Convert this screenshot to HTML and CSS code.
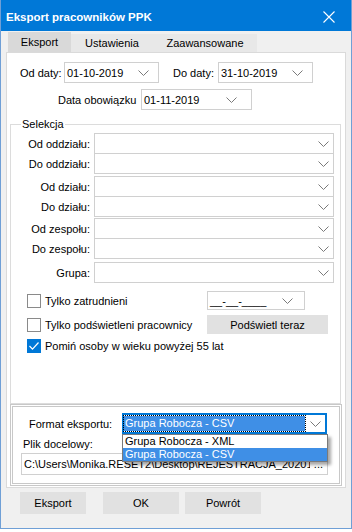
FILE: index.html
```html
<!DOCTYPE html>
<html lang="pl">
<head>
    <meta charset="UTF-8">
    <meta name="viewport" content="width=device-width, initial-scale=1.0">
    <title>Eksport pracowników PPK</title>
    <link rel="stylesheet" href="styles.css">
</head>
<body>
    <div class="window">
        <div class="titlebar">
            <span class="title">Eksport pracowników PPK</span>
            <svg class="close" width="12" height="12" viewBox="0 0 12 12"><path d="M0.5 0.5 L11.5 11.5 M11.5 0.5 L0.5 11.5" stroke="#fff" stroke-width="1.1" fill="none"/></svg>
        </div>
        <div class="client">
            <div class="tabs">
                <div class="tab tab-1 active">Eksport</div>
                <div class="tab tab-2">Ustawienia</div>
                <div class="tab tab-3">Zaawansowane</div>
            </div>
            <div class="page">
                <div class="date-row">
                    <span class="lbl lbl-od">Od daty:</span>
                    <div class="combo date">
                        <span class="val">01-10-2019</span>
                        <svg class="chev" width="11" height="6" viewBox="0 0 11 6"><polyline points="0.5,0.5 5.5,5.5 10.5,0.5" fill="none" stroke="#7a7a7a"/></svg>
                    </div>
                    <span class="lbl lbl-do">Do daty:</span>
                    <div class="combo date">
                        <span class="val">31-10-2019</span>
                        <svg class="chev" width="11" height="6" viewBox="0 0 11 6"><polyline points="0.5,0.5 5.5,5.5 10.5,0.5" fill="none" stroke="#7a7a7a"/></svg>
                    </div>
                </div>
                <div class="date-row obow">
                    <span class="lbl lbl-obow">Data obowiązku</span>
                    <div class="combo date wide">
                        <span class="val">01-11-2019</span>
                        <svg class="chev" width="11" height="6" viewBox="0 0 11 6"><polyline points="0.5,0.5 5.5,5.5 10.5,0.5" fill="none" stroke="#7a7a7a"/></svg>
                    </div>
                </div>

                <fieldset class="group">
                    <legend>Selekcja</legend>
                    <div class="pair first">
                        <div class="sel-row"><span class="sel-lbl">Od oddziału:</span><div class="combo sel"><svg class="chev" width="11" height="6" viewBox="0 0 11 6"><polyline points="0.5,0.5 5.5,5.5 10.5,0.5" fill="none" stroke="#7a7a7a"/></svg></div></div>
                        <div class="sel-row"><span class="sel-lbl">Do oddziału:</span><div class="combo sel"><svg class="chev" width="11" height="6" viewBox="0 0 11 6"><polyline points="0.5,0.5 5.5,5.5 10.5,0.5" fill="none" stroke="#7a7a7a"/></svg></div></div>
                    </div>
                    <div class="pair second">
                        <div class="sel-row"><span class="sel-lbl">Od działu:</span><div class="combo sel"><svg class="chev" width="11" height="6" viewBox="0 0 11 6"><polyline points="0.5,0.5 5.5,5.5 10.5,0.5" fill="none" stroke="#7a7a7a"/></svg></div></div>
                        <div class="sel-row"><span class="sel-lbl">Do działu:</span><div class="combo sel"><svg class="chev" width="11" height="6" viewBox="0 0 11 6"><polyline points="0.5,0.5 5.5,5.5 10.5,0.5" fill="none" stroke="#7a7a7a"/></svg></div></div>
                    </div>
                    <div class="pair third">
                        <div class="sel-row"><span class="sel-lbl">Od zespołu:</span><div class="combo sel"><svg class="chev" width="11" height="6" viewBox="0 0 11 6"><polyline points="0.5,0.5 5.5,5.5 10.5,0.5" fill="none" stroke="#7a7a7a"/></svg></div></div>
                        <div class="sel-row"><span class="sel-lbl">Do zespołu:</span><div class="combo sel"><svg class="chev" width="11" height="6" viewBox="0 0 11 6"><polyline points="0.5,0.5 5.5,5.5 10.5,0.5" fill="none" stroke="#7a7a7a"/></svg></div></div>
                    </div>
                    <div class="pair last">
                        <div class="sel-row"><span class="sel-lbl">Grupa:</span><div class="combo sel"><svg class="chev" width="11" height="6" viewBox="0 0 11 6"><polyline points="0.5,0.5 5.5,5.5 10.5,0.5" fill="none" stroke="#7a7a7a"/></svg></div></div>
                    </div>

                    <div class="check-row row-1">
                        <div class="check"><span class="box"></span><span>Tylko zatrudnieni</span></div>
                        <div class="combo mask">
                            <span class="val">__-__-____</span>
                            <svg class="chev" width="11" height="6" viewBox="0 0 11 6"><polyline points="0.5,0.5 5.5,5.5 10.5,0.5" fill="none" stroke="#7a7a7a"/></svg>
                        </div>
                    </div>
                    <div class="check-row row-2">
                        <div class="check"><span class="box"></span><span>Tylko podświetleni pracownicy</span></div>
                        <button class="btn highlight">Podświetl teraz</button>
                    </div>
                    <div class="check-row row-3">
                        <div class="check"><span class="box checked"><svg width="12" height="12" viewBox="0 0 12 12"><polyline points="1.5,6 4.5,9.2 10.5,2.5" fill="none" stroke="#fff" stroke-width="1.2"/></svg></span><span>Pomiń osoby w wieku powyżej 55 lat</span></div>
                    </div>
                </fieldset>

                <div class="export-panel">
                    <div class="format-row">
                        <span class="format-lbl">Format eksportu:</span>
                        <div class="combo format">
                            <span class="current">Grupa Robocza - CSV</span>
                            <svg class="chev" width="11" height="6" viewBox="0 0 11 6"><polyline points="0.5,0.5 5.5,5.5 10.5,0.5" fill="none" stroke="#7a7a7a"/></svg>
                            <ul class="dropdown">
                                <li>Grupa Robocza - XML</li>
                                <li class="hover">Grupa Robocza - CSV</li>
                            </ul>
                        </div>
                    </div>
                    <div class="file-lbl">Plik docelowy:</div>
                    <div class="path">
                        <span class="path-text">C:\Users\Monika.RESET2\Desktop\REJESTRACJA_20201201.csv</span>
                        <span class="dots">...</span>
                    </div>
                </div>
            </div>
            <div class="buttons">
                <button class="btn b-export">Eksport</button>
                <button class="btn b-ok">OK</button>
                <button class="btn b-back">Powrót</button>
            </div>
        </div>
    </div>
</body>
</html>
```

FILE: styles.css
```css
body {
    margin: 0;
    background: #ffffff;
    font-family: "Liberation Sans", Arial, sans-serif;
    font-size: 11px;
    color: #000000;
}

.window {
    width: 350px;
    height: 528px;
    border: 1px solid #6f9fd6;
    border-top: 0;
    background: #f0f0f0;
    display: flex;
    flex-direction: column;
}

.titlebar {
    height: 31px;
    box-sizing: border-box;
    padding: 2px 16px 0 5px;
    background: #0078d7;
    color: #ffffff;
    display: flex;
    align-items: center;
    justify-content: space-between;
}

.title {
    font-weight: bold;
    font-size: 11.5px;
}

.client {
    padding-top: 1px;
}

/* tabs */
.tabs {
    display: flex;
    align-items: flex-end;
    height: 20px;
    margin-left: 7px;
}

.tab {
    height: 18px;
    line-height: 18px;
    text-align: center;
    background: #e8e8e8;
}

.tab.active {
    height: 20px;
    line-height: 20px;
    background: #d9d9d9;
}

.tab-1 { width: 63px; }
.tab-2 { width: 82px; }
.tab-3 { width: 104px; }

.page {
    margin-left: 5px;
    width: 340px;
    height: 436px;
    box-sizing: border-box;
    border: 1px solid #dadada;
    background: #ffffff;
}

/* combos */
.combo {
    box-sizing: border-box;
    height: 21px;
    border: 1px solid #d0d0d0;
    background: #ffffff;
    display: flex;
    align-items: center;
    justify-content: space-between;
}

.combo .val {
    padding-left: 2px;
}

.chev {
    flex-shrink: 0;
}

.date-row {
    display: flex;
    align-items: center;
    margin: 9px 0 0 13px;
}

.lbl-od { width: 44px; }
.lbl-do { width: 45px; margin-left: 14px; }

.combo.date {
    width: 95px;
    padding-right: 9px;
}

.date-row.obow {
    margin: 6px 0 0 51px;
}

.lbl-obow { width: 83px; }

.combo.date.wide {
    width: 111px;
    padding-right: 14px;
}

/* group box */
.group {
    margin: 7px 0 0 3px;
    padding: 0;
    width: 331px;
    height: 287px;
    box-sizing: border-box;
    border: 1px solid #dcdcdc;
}

.group legend {
    margin-left: 10px;
    padding: 0 1px;
    line-height: 14px;
}

.pair.first { margin-top: 2px; }
.pair.second { margin-top: 2px; }
.pair.third { margin-top: 1px; }
.pair.last { margin-top: 3px; }

.sel-row {
    display: flex;
    align-items: center;
}

.sel-row + .sel-row {
    margin-top: -1px;
}

.sel-lbl {
    width: 79px;
    text-align: right;
    margin-right: 4px;
}

.combo.sel {
    width: 240px;
    justify-content: flex-end;
    padding-right: 4px;
}

.check-row {
    display: flex;
    align-items: center;
    margin-left: 16px;
}

.check-row.row-1 { margin-top: 8px; height: 19px; }
.check-row.row-2 { margin-top: 5px; height: 19px; }
.check-row.row-3 { margin-top: 5px; height: 14px; }

.check {
    width: 180px;
    display: flex;
    align-items: center;
    gap: 4px;
    white-space: nowrap;
}

.row-3 .check {
    width: auto;
}

.box {
    width: 14px;
    height: 14px;
    box-sizing: border-box;
    border: 1px solid #8a8a8a;
    background: #ffffff;
    display: flex;
    align-items: center;
    justify-content: center;
}

.box.checked {
    border-color: #0078d7;
    background: #0078d7;
}

.combo.mask {
    width: 98px;
    height: 19px;
    padding-right: 11px;
}

.btn {
    font-family: "Liberation Sans", Arial, sans-serif;
    font-size: 11px;
    color: #000000;
    background: #e1e1e1;
    border: 0;
    padding: 0;
}

.btn.highlight {
    width: 121px;
    height: 19px;
}

/* export panel */
.export-panel {
    margin-left: 3px;
    width: 332px;
    height: 82px;
    box-sizing: border-box;
    border: 3px double #c8c8c8;
}

.format-row {
    display: flex;
    align-items: center;
    margin-top: 6px;
}

.format-lbl {
    width: 93px;
    padding-left: 16px;
}

.combo.format {
    position: relative;
    width: 205px;
    border: 2px solid #0078d7;
    padding-right: 4px;
}

.current {
    flex: 1;
    height: 15px;
    line-height: 15px;
    margin-right: 5px;
    padding-left: 1px;
    background: #3f8fe6;
    color: #ffffff;
    outline: 1px dotted #000000;
}

.dropdown {
    position: absolute;
    top: 19px;
    left: -2px;
    width: 206px;
    box-sizing: border-box;
    margin: 0;
    padding: 0;
    list-style: none;
    background: #ffffff;
    border: 1px solid #7a7a7a;
    box-shadow: 3px 3px 3px rgba(0, 0, 0, 0.35);
}

.dropdown li {
    height: 13px;
    line-height: 13px;
    padding-left: 2px;
}

.dropdown li.hover {
    background: #3f8fe6;
    color: #ffffff;
}

.file-lbl {
    margin: 2px 0 0 10px;
    line-height: 16px;
}

.path {
    margin: 1px 0 0 8px;
    width: 307px;
    height: 22px;
    box-sizing: border-box;
    border: 1px solid #d0d0d0;
    display: flex;
    align-items: center;
    padding: 0 4px 0 2px;
}

.path-text {
    flex: 1;
    overflow: hidden;
    white-space: nowrap;
}

.dots {
    margin-left: 4px;
}

/* bottom buttons */
.buttons {
    display: flex;
    margin: 4px 0 0 19px;
}

.buttons .btn {
    height: 22px;
}

.b-export { width: 66px; }
.b-ok { width: 76px; margin-left: 17px; }
.b-back { width: 76px; margin-left: 6px; }
```
